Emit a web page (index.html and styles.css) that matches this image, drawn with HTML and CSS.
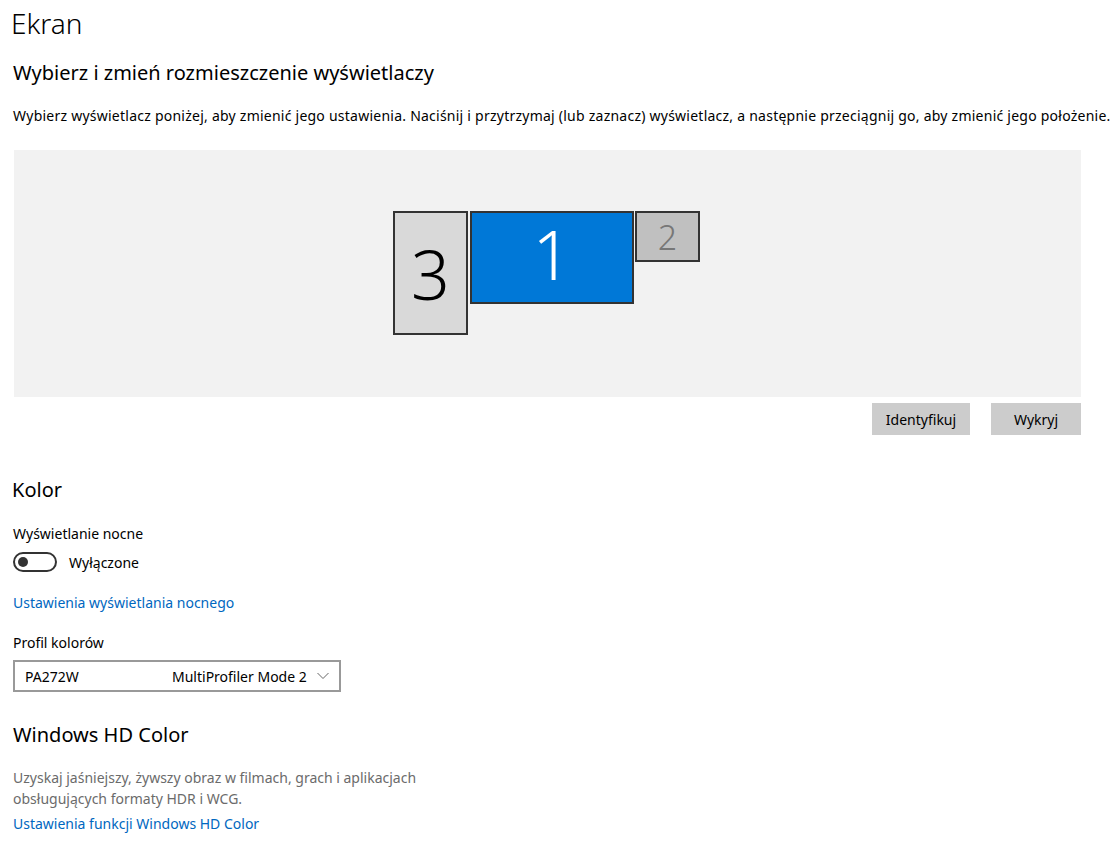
FILE: index.html
```html
<!DOCTYPE html>
<html lang="pl">
<head>
    <meta charset="UTF-8">
    <title>Ekran</title>
    <link rel="stylesheet" href="styles.css">
</head>
<body>
    <div class="page">
        <h1 class="title">Ekran</h1>
        <h2 class="section">Wybierz i zmień rozmieszczenie wyświetlaczy</h2>
        <p class="desc">Wybierz wyświetlacz poniżej, aby zmienić jego ustawienia. Naciśnij i przytrzymaj (lub zaznacz) wyświetlacz, a następnie przeciągnij go, aby zmienić jego położenie.</p>

        <!-- arrangement canvas -->
        <div class="arrange">
            <div class="monitor mon-3">3</div>
            <div class="monitor mon-1">1</div>
            <div class="monitor mon-2">2</div>
        </div>
        <div class="arrange-actions">
            <button class="btn btn-identify">Identyfikuj</button>
            <button class="btn btn-detect">Wykryj</button>
        </div>

        <h2 class="section section-color">Kolor</h2>
        <div class="label">Wyświetlanie nocne</div>
        <div class="toggle-row">
            <span class="toggle"><span class="knob"></span></span>
            <span class="toggle-text">Wyłączone</span>
        </div>
        <a class="link link-night" href="#">Ustawienia wyświetlania nocnego</a>

        <div class="label label-profile">Profil kolorów</div>
        <div class="select">
            <span class="select-name">PA272W</span>
            <span class="select-value">MultiProfiler Mode 2</span>
            <svg class="chevron" width="12" height="8" viewBox="0 0 12 8"><path d="M0.5 1 L6 6.5 L11.5 1" fill="none" stroke="#666" stroke-width="1"/></svg>
        </div>

        <h2 class="section section-hd">Windows HD Color</h2>
        <p class="muted">Uzyskaj jaśniejszy, żywszy obraz w filmach, grach i aplikacjach<br>obsługujących formaty HDR i WCG.</p>
        <a class="link link-hd" href="#">Ustawienia funkcji Windows HD Color</a>
    </div>
</body>
</html>
```

FILE: styles.css
```css
:root {
    --text: #000000;
    --muted: #6b6b6b;
    --accent: #0078d7;
    --link: #0067c0;
    --canvas: #f2f2f2;
    --button: #cccccc;
}

body {
    margin: 0;
    background: #ffffff;
    color: var(--text);
    font-family: 'Noto Sans', 'Open Sans', sans-serif;
    font-size: 14px;
}

.page {
    width: 1068px;
    padding: 0 0 0 13px;
}

.title {
    font-size: 28px;
    font-weight: 300;
    margin: 0;
    padding-top: 3px;
    margin-left: -2px;
    line-height: 40px;
}

.section {
    font-size: 20px;
    font-weight: 400;
    margin: 16px 0 0;
    line-height: 28px;
}

.desc {
    margin: 19px 0 0;
    line-height: 20px;
    white-space: nowrap;
    letter-spacing: 0.24px;
}

.arrange {
    position: relative;
    margin: 24px 0 0 1px;
    height: 247px;
    background: var(--canvas);
}

.monitor {
    position: absolute;
    box-sizing: border-box;
    border: 2px solid #333333;
    display: flex;
    align-items: center;
    justify-content: center;
    font-weight: 300;
}

.mon-3 {
    left: 379px;
    top: 61px;
    width: 75px;
    height: 124px;
    background: #d9d9d9;
    font-size: 68px;
}

.mon-1 {
    left: 456px;
    top: 61px;
    width: 164px;
    height: 93px;
    background: var(--accent);
    color: #ffffff;
    font-size: 68px;
    padding-bottom: 8px;
}

.mon-2 {
    left: 621px;
    top: 61px;
    width: 65px;
    height: 51px;
    background: #c0c0c0;
    color: #777777;
    font-size: 34px;
}

.arrange-actions {
    display: flex;
    justify-content: flex-end;
    gap: 21px;
    margin-top: 6px;
}

.btn {
    border: none;
    background: var(--button);
    font-family: inherit;
    font-size: 14px;
    height: 32px;
    padding: 0;
    color: #000;
}

.btn-identify {
    width: 98px;
}

.btn-detect {
    width: 90px;
}

.section-color {
    margin-top: 41px;
    margin-left: -1px;
}

.label {
    margin-top: 20px;
    line-height: 20px;
}

.toggle-row {
    display: flex;
    align-items: center;
    gap: 12px;
    margin-top: 8px;
}

.toggle {
    box-sizing: border-box;
    width: 44px;
    height: 20px;
    border: 2px solid #333333;
    border-radius: 10px;
    display: flex;
    align-items: center;
    padding-left: 3px;
}

.knob {
    width: 10px;
    height: 10px;
    border-radius: 50%;
    background: #333333;
}

.link {
    display: block;
    color: var(--link);
    text-decoration: none;
    line-height: 20px;
}

.link-night {
    margin-top: 21px;
}

.label-profile {
    margin-top: 20px;
}

.select {
    box-sizing: border-box;
    width: 328px;
    height: 32px;
    margin-top: 7px;
    border: 2px solid #999999;
    display: flex;
    align-items: center;
    padding: 0 10px 0 10px;
}

.select-name {
    width: 147px;
}

.select-value {
    flex: 1;
}

.section-hd {
    margin-top: 29px;
}

.muted {
    color: var(--muted);
    margin: 18px 0 0;
    line-height: 21px;
}

.link-hd {
    margin-top: 5px;
}
```
